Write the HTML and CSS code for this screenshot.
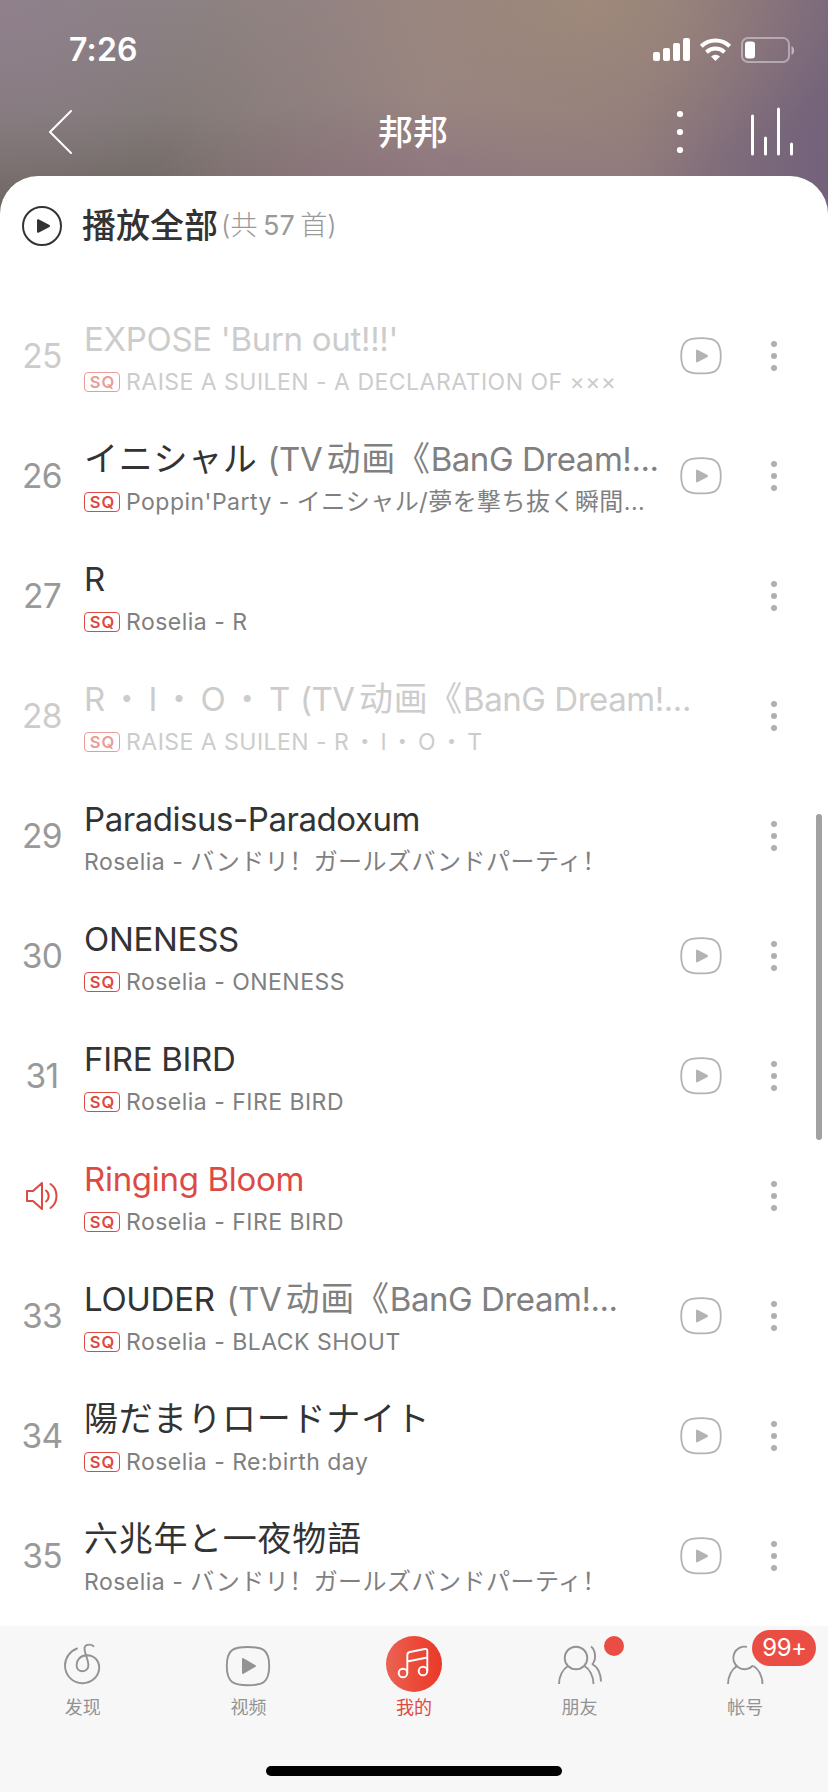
FILE: index.html
```html
<!DOCTYPE html>
<html lang="zh-CN">
<head>
<meta charset="utf-8">
<title>邦邦</title>
<link rel="stylesheet" href="styles.css">
</head>
<body>
<svg class="defs" width="0" height="0" aria-hidden="true">
  <symbol id="video" viewBox="0 0 42 38">
    <path d="M21 1.200C33 1.200 40.800 2.500 40.800 19S33 36.400 21 36.400 1.200 35 1.200 19 9 1.200 21 1.200Z" fill="none" stroke="currentColor" stroke-width="1.800"/>
    <path d="M17 13.600v10.800L27 19Z" fill="currentColor" stroke="currentColor" stroke-width="2" stroke-linejoin="round"/>
  </symbol>
  <symbol id="more" viewBox="0 0 8 32">
    <circle cx="4" cy="4" r="3"/><circle cx="4" cy="16" r="3"/><circle cx="4" cy="28" r="3"/>
  </symbol>
</svg>
<div class="phone">
  <header class="top">
    <div class="status">
      <span class="time">7:26</span>
      <svg class="signal" width="144" height="28" viewBox="0 0 144 28">
        <g fill="#fff">
          <rect x="1" y="15" width="7" height="9" rx="2"/><rect x="11" y="11" width="7" height="13" rx="2"/>
          <rect x="21" y="6" width="7" height="18" rx="2"/><rect x="31" y="1" width="7" height="23" rx="2"/>
          <path d="M63.500 24l-4.500-4.500a6.500 6.500 0 0 1 9 0Z"/>
        </g>
        <g fill="none" stroke="#fff" stroke-width="4">
          <path d="M54.500 15.200a13 13 0 0 1 18 0M49.300 9.200a20.500 20.500 0 0 1 28.400 0" />
        </g>
        <rect x="90" y="1" width="47" height="24" rx="6" fill="none" stroke="#fff" stroke-opacity=".4" stroke-width="2"/>
        <rect x="93" y="4.500" width="10" height="17" rx="3" fill="#fff"/>
        <path d="M139.500 9v9c3.500-1.500 3.500-7.500 0-9Z" fill="#fff" fill-opacity=".5"/>
      </svg>
    </div>
    <nav class="nav">
      <svg class="back" width="24" height="46" viewBox="0 0 24 46"><path d="M23 2 2 23 23 44" fill="none" stroke="#fff" stroke-width="2" stroke-linecap="round" stroke-linejoin="round"/></svg>
      <h1>邦邦</h1>
      <svg class="menu" width="8" height="44" viewBox="0 0 8 44" fill="#fff"><circle cx="4" cy="4" r="3.100"/><circle cx="4" cy="22" r="3.100"/><circle cx="4" cy="40" r="3.100"/></svg>
      <svg class="bars" width="44" height="50" viewBox="0 0 44 50"><path d="M2.500 9v38M15.500 31v16M28.500 2v45M41.500 37v10" stroke="#fff" stroke-width="3" stroke-linecap="round"/></svg>
    </nav>
  </header>
  <main class="sheet">
    <div class="playall">
      <svg width="40" height="40" viewBox="0 0 40 40"><circle cx="20" cy="20" r="19" fill="none" stroke="#333" stroke-width="2"/><path d="M16 14.200v11.600L27 20Z" fill="#333" stroke="#333" stroke-width="2" stroke-linejoin="round"/></svg>
      <strong>播放全部</strong><span class="count">(共 <i>57</i> 首)</span>
    </div>
    <ul class="list">
      <li class="row off"><span class="num">25</span><div class="info"><p class="title">EXPOSE 'Burn out!!!'</p><p class="sub"><b class="sq">SQ</b><span>RAISE A SUILEN - A DECLARATION OF ×××</span></p></div><svg class="video"><use href="#video"/></svg><svg class="more"><use href="#more"/></svg></li>
      <li class="row"><span class="num">26</span><div class="info"><p class="title"><span class="cj">イニシャル</span> <em>(TV<span class="cj thin"> 动画《</span>BanG Dream!...</em></p><p class="sub"><b class="sq">SQ</b><span>Poppin'Party - <span class="cj">イニシャル/夢を撃ち抜く瞬間</span>...</span></p></div><svg class="video"><use href="#video"/></svg><svg class="more"><use href="#more"/></svg></li>
      <li class="row"><span class="num">27</span><div class="info"><p class="title">R</p><p class="sub"><b class="sq">SQ</b><span>Roselia - R</span></p></div><svg class="more"><use href="#more"/></svg></li>
      <li class="row off"><span class="num">28</span><div class="info"><p class="title">R<i class="mid">・</i>I<i class="mid">・</i>O<i class="mid">・</i>T <em>(TV<span class="cj thin"> 动画《</span>BanG Dream!...</em></p><p class="sub"><b class="sq">SQ</b><span>RAISE A SUILEN - R<i class="mid">・</i>I<i class="mid">・</i>O<i class="mid">・</i>T</span></p></div><svg class="more"><use href="#more"/></svg></li>
      <li class="row"><span class="num">29</span><div class="info"><p class="title tight">Paradisus-Paradoxum</p><p class="sub"><span>Roselia - <span class="cj">バンドリ！ガールズバンドパーティ！</span></span></p></div><svg class="more"><use href="#more"/></svg></li>
      <li class="row"><span class="num">30</span><div class="info"><p class="title">ONENESS</p><p class="sub"><b class="sq">SQ</b><span>Roselia - ONENESS</span></p></div><svg class="video"><use href="#video"/></svg><svg class="more"><use href="#more"/></svg></li>
      <li class="row"><span class="num">31</span><div class="info"><p class="title">FIRE BIRD</p><p class="sub"><b class="sq">SQ</b><span>Roselia - FIRE BIRD</span></p></div><svg class="video"><use href="#video"/></svg><svg class="more"><use href="#more"/></svg></li>
      <li class="row playing"><span class="num"><svg width="34" height="30" viewBox="0 0 34 30" fill="none" stroke="currentColor" stroke-width="2" stroke-linejoin="round" stroke-linecap="round"><path d="M2 10v10h6l9 8V2L8 10ZM21 9.500a7 7 0 0 1 0 11M25.500 3c8 5.500 8 18.500 0 24"/></svg></span><div class="info"><p class="title">Ringing Bloom</p><p class="sub"><b class="sq">SQ</b><span>Roselia - FIRE BIRD</span></p></div><svg class="more"><use href="#more"/></svg></li>
      <li class="row"><span class="num">33</span><div class="info"><p class="title loose">LOUDER <em>(TV<span class="cj thin"> 动画《</span>BanG Dream!...</em></p><p class="sub"><b class="sq">SQ</b><span>Roselia - BLACK SHOUT</span></p></div><svg class="video"><use href="#video"/></svg><svg class="more"><use href="#more"/></svg></li>
      <li class="row"><span class="num">34</span><div class="info"><p class="title"><span class="cj">陽だまりロードナイト</span></p><p class="sub"><b class="sq">SQ</b><span>Roselia - Re:birth day</span></p></div><svg class="video"><use href="#video"/></svg><svg class="more"><use href="#more"/></svg></li>
      <li class="row"><span class="num">35</span><div class="info"><p class="title"><span class="cj">六兆年と一夜物語</span></p><p class="sub"><span>Roselia - <span class="cj">バンドリ！ガールズバンドパーティ！</span></span></p></div><svg class="video"><use href="#video"/></svg><svg class="more"><use href="#more"/></svg></li>
    </ul>
  </main>
  <div class="scrollbar"></div>
  <footer class="tabs">
    <div class="tab"><svg width="56" height="56" viewBox="55 1636 56 56" fill="none" stroke="currentColor" stroke-width="1.900" stroke-linecap="round"><path d="M77 1648.500C70 1651 65 1658 65 1665.500C65 1675.500 73 1683.200 82.300 1683.200C92 1683.200 99.200 1676 99.200 1667.500C99.200 1660.500 94 1655.200 87 1655.200C80.500 1655.200 76.600 1660 76.600 1665C76.600 1668.800 79 1671.200 82.500 1671.200C86 1671.200 88.600 1668.500 88.400 1664.500C88 1659 84.500 1653 84.500 1648.500C84.500 1645.500 87 1644.600 89.500 1644.600C91.300 1644.600 92.500 1645.300 93.500 1646.200"/></svg><span>发现</span></div>
    <div class="tab"><svg width="56" height="56" viewBox="220 1636 56 56"><path d="M248 1647C262 1647 269.200 1649 269.200 1666S262 1685.200 248 1685.200 226.800 1683 226.800 1666 234 1647 248 1647Z" fill="none" stroke="currentColor" stroke-width="1.900"/><path d="M243 1659v14l12-7Z" fill="currentColor" stroke="currentColor" stroke-width="2" stroke-linejoin="round"/></svg><span>视频</span></div>
    <div class="tab active"><svg width="56" height="56" viewBox="386 1636 56 56"><defs><linearGradient id="red" x1="0" x2="1"><stop offset="0" stop-color="#ea6354"/><stop offset=".5" stop-color="#ec4b39"/><stop offset="1" stop-color="#e9392a"/></linearGradient></defs><circle cx="414" cy="1664" r="28" fill="url(#red)"/><g fill="none" stroke="#fff" stroke-width="1.900" stroke-linejoin="round"><circle cx="403" cy="1673" r="4.300"/><circle cx="423" cy="1671" r="4.300"/><path d="M407.300 1673v-18q0-2.500 2.500-3l15-3q2.500-.4 2.500 2v20M407.300 1661.500l20-4"/></g></svg><span>我的</span></div>
    <div class="tab"><svg width="56" height="56" viewBox="552 1636 56 56" fill="none" stroke="currentColor" stroke-width="1.900"><circle cx="576" cy="1658" r="11.300"/><path d="M559 1684c0-8 4-15 9-18M593.500 1684c0-8-4-15-9-18M591 1646.500c4 3 6 12 1.500 17.500l1 1c4 2 7.500 9 7.500 16.500"/></svg><span>朋友</span><i class="dot"></i></div>
    <div class="tab"><svg width="56" height="56" viewBox="718 1636 56 56" fill="none" stroke="currentColor" stroke-width="1.900"><path d="M748 1646.900A11.300 11.300 0 1 0 754 1665.500M729 1684c0-8 4-15 9-18M763.500 1684c0-8-4-15-9-18"/></svg><span>帐号</span><i class="badge">99+</i></div>
    <div class="home"></div>
  </footer>
</div>
</body>
</html>
```

FILE: styles.css
```css
* { box-sizing: border-box; margin: 0; padding: 0; }
body { font-family: Inter, "Noto Sans CJK SC", sans-serif; background: #fff; color: #333; }
em, i { font-style: normal; }
.defs { position: absolute; }
.phone {
  position: relative; width: 828px; height: 1792px; overflow: hidden;
  display: flex; flex-direction: column;
  background:
    radial-gradient(circle 220px at 0 0, rgba(146,128,146,.7), rgba(146,128,146,0)),
    radial-gradient(ellipse 260px 190px at 590px 0, rgba(160,139,122,.85), rgba(160,139,122,0)),
    radial-gradient(ellipse 230px 300px at 860px 170px, rgba(112,96,122,1), rgba(112,96,122,0)),
    radial-gradient(ellipse 260px 110px at 400px 205px, rgba(137,110,125,.75), rgba(137,110,125,0)),
    linear-gradient(90deg, rgba(150,128,126,0) 18%, rgba(152,132,130,1) 52%, #8e787b 82%, #826d7a) 0 0 / 100% 220px no-repeat,
    linear-gradient(#8a8181, #827a78 50%, #6a635d) 0 0 / 100% 220px no-repeat;
}
.top { height: 176px; color: #fff; flex: none; }
.status { height: 88px; display: flex; justify-content: space-between; padding: 31px 32px 0 69px; }
.time { font-size: 32px; line-height: 38px; font-weight: 600; letter-spacing: .2px; }
.signal { margin-top: 6px; }
.nav { height: 88px; display: flex; align-items: center; padding: 0 34px 0 48px; }
.nav h1 { flex: 1; text-align: center; font-size: 35px; line-height: 50px; font-weight: 500; padding-left: 78px; }
.menu { margin-right: 66px; }
.sheet { flex: none; height: 1450px; background: #fff; border-radius: 38px 38px 0 0; overflow: hidden; }
.playall { height: 120px; padding: 30px 0 50px 22px; display: flex; align-items: center; }
.playall strong { margin-left: 20px; font-size: 34px; line-height: 40px; font-weight: 500; }
.count { margin-left: 3px; font-size: 27px; line-height: 40px; font-weight: 300; color: #999; white-space: nowrap; word-spacing: -2px; }
.count i { font-weight: 400; }
.list { list-style: none; }
.row { height: 120px; display: flex; align-items: center; padding-right: 50px; }
.num { width: 84px; flex: none; text-align: center; font-size: 33.500px; line-height: 40px; font-weight: 400; letter-spacing: -.7px; color: #999; }
.num svg { display: block; margin: -1px auto 0; }
.info { flex: 1; min-width: 0; white-space: nowrap; padding-top: 5px; }
.title { font-size: 33px; line-height: 46px; height: 47px; letter-spacing: -.3px; }
.title .cj { font-size: 34px; letter-spacing: .7px; }
.title .thin { word-spacing: -6px; }
.title em { color: #808080; margin-left: 1px; letter-spacing: -.45px; }
.loose em { margin-left: 3px; }
.tight { letter-spacing: -.45px; }
.mid { display: inline-flex; justify-content: center; width: 43.500px; }
.sub .mid { width: 31px; }
.sub { display: flex; align-items: center; height: 38px; font-size: 23px; line-height: 36px; color: #808080; }
.sub > span { letter-spacing: .48px; }
.sub .cj { font-size: 24px; letter-spacing: .45px; }
.sq { width: 36px; height: 20px; margin-right: 6px; border: 1.500px solid #dc4a44; border-radius: 4px; color: #dc4a44; font-size: 16.500px; line-height: 18px; font-weight: 600; letter-spacing: 1px; padding-left: 1px; text-align: center; }
.video { width: 42px; height: 38px; flex: none; margin-right: 48px; color: #b3b3b3; }
.more { width: 8px; height: 32px; flex: none; fill: #afafaf; }
.off .num, .off .title, .off .title em, .off .sub { color: #ccc; }
.off .sq { opacity: .55; }
.playing .title, .playing .num { color: #dc4a44; }
.scrollbar { position: absolute; left: 816px; top: 814px; width: 6px; height: 326px; border-radius: 3px; background: #a1a1a1; }
.tabs { position: relative; height: 166px; flex: none; display: flex; background: #f7f7f7; }
.tab { position: relative; flex: 1; padding-top: 10px; display: flex; flex-direction: column; align-items: center; color: #939393; font-size: 18px; line-height: 24px; }
.tab span { margin-top: 4px; }
.tab.active { color: #dc4a44; }
.dot { position: absolute; left: 107px; top: 10px; width: 20px; height: 20px; border-radius: 50%; background: #ea4d44; }
.badge { position: absolute; left: 90px; top: 4px; width: 64px; height: 36px; border-radius: 18px; background: #ea4d44; color: #fff; font-size: 24px; line-height: 36px; text-align: center; letter-spacing: -.5px; }
.home { position: absolute; left: 266px; top: 140px; width: 296px; height: 10px; border-radius: 5px; background: #000; }
```
